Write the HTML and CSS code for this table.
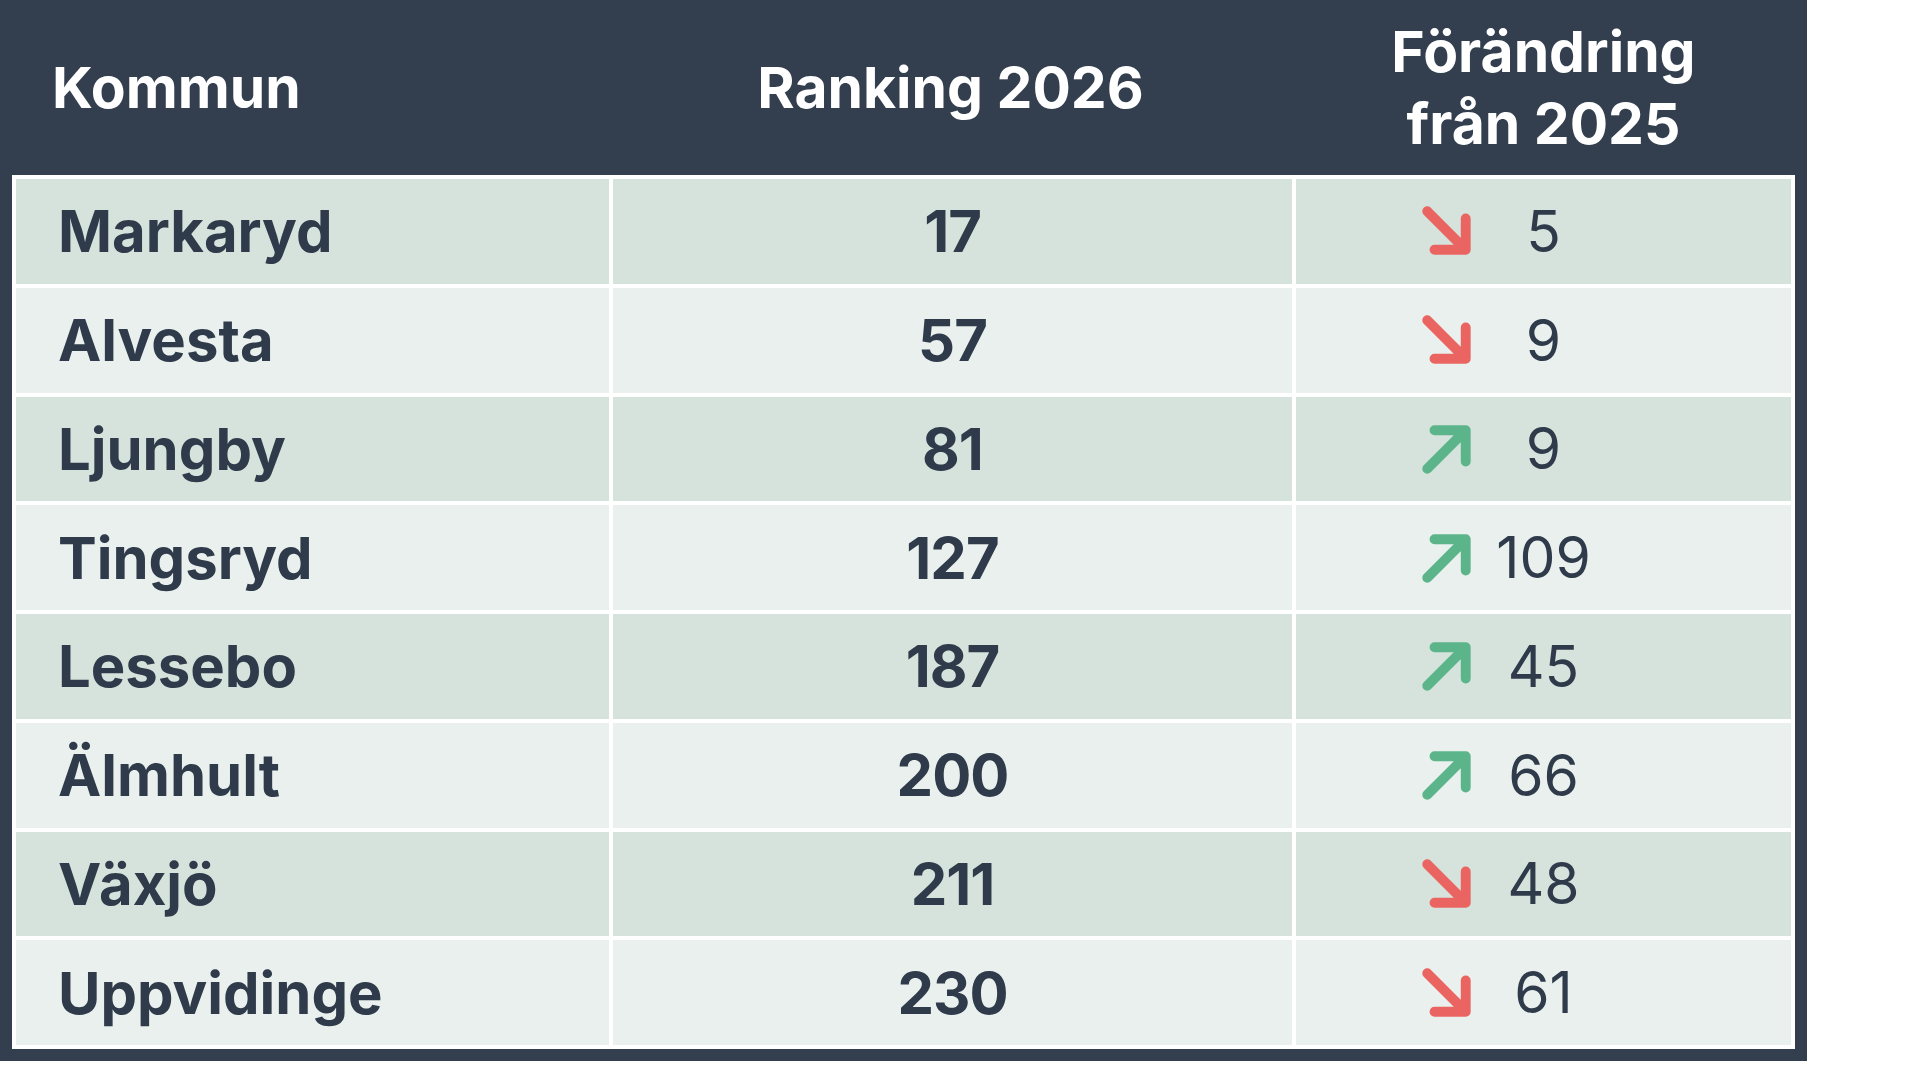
FILE: index.html
```html
<!DOCTYPE html>
<html lang="sv">
<head>
<meta charset="utf-8">
<title>Ranking 2026</title>
<link rel="stylesheet" href="styles.css">
</head>
<body>
<div class="frame">
  <table class="rank">
    <colgroup>
      <col class="c1"><col class="c2"><col class="c3">
    </colgroup>
    <thead>
      <tr>
        <th class="name">Kommun</th>
        <th>Ranking 2026</th>
        <th>Förändring<br>från 2025</th>
      </tr>
    </thead>
    <tbody>
      <tr class="odd"><td class="name">Markaryd</td><td class="num">17</td><td class="chg"><span class="ch"><svg class="arr down" viewBox="0 0 50 50"><path d="M6 6 L43 43 M43 13 L43 43 L13 43"/></svg><span class="val">5</span></span></td></tr>
      <tr class="even"><td class="name">Alvesta</td><td class="num">57</td><td class="chg"><span class="ch"><svg class="arr down" viewBox="0 0 50 50"><path d="M6 6 L43 43 M43 13 L43 43 L13 43"/></svg><span class="val">9</span></span></td></tr>
      <tr class="odd"><td class="name">Ljungby</td><td class="num">81</td><td class="chg"><span class="ch"><svg class="arr up" viewBox="0 0 50 50"><path d="M6 44 L43 7 M13 7 L43 7 L43 37"/></svg><span class="val">9</span></span></td></tr>
      <tr class="even"><td class="name">Tingsryd</td><td class="num">127</td><td class="chg"><span class="ch"><svg class="arr up" viewBox="0 0 50 50"><path d="M6 44 L43 7 M13 7 L43 7 L43 37"/></svg><span class="val">109</span></span></td></tr>
      <tr class="odd"><td class="name">Lessebo</td><td class="num">187</td><td class="chg"><span class="ch"><svg class="arr up" viewBox="0 0 50 50"><path d="M6 44 L43 7 M13 7 L43 7 L43 37"/></svg><span class="val">45</span></span></td></tr>
      <tr class="even"><td class="name">Älmhult</td><td class="num">200</td><td class="chg"><span class="ch"><svg class="arr up" viewBox="0 0 50 50"><path d="M6 44 L43 7 M13 7 L43 7 L43 37"/></svg><span class="val">66</span></span></td></tr>
      <tr class="odd"><td class="name">Växjö</td><td class="num">211</td><td class="chg"><span class="ch"><svg class="arr down" viewBox="0 0 50 50"><path d="M6 6 L43 43 M43 13 L43 43 L13 43"/></svg><span class="val">48</span></span></td></tr>
      <tr class="even last"><td class="name">Uppvidinge</td><td class="num">230</td><td class="chg"><span class="ch"><svg class="arr down" viewBox="0 0 50 50"><path d="M6 6 L43 43 M43 13 L43 43 L13 43"/></svg><span class="val">61</span></span></td></tr>
    </tbody>
  </table>
</div>
</body>
</html>
```
FILE: styles.css
```css
html, body {
  margin: 0;
  padding: 0;
  background: #ffffff;
}

body {
  font-family: Inter, "Noto Sans", "Liberation Sans", sans-serif;
  color: #2f3b4a;
}

.frame {
  width: 1807px;
  box-sizing: border-box;
  background: #333f4e;
  padding: 0 12px 12px 12px;
}

.rank {
  width: 100%;
  border-collapse: separate;
  border-spacing: 0;
  table-layout: fixed;
}

.c1 { width: 597px; }
.c2 { width: 683px; }

.rank th {
  height: 175px;
  padding: 0;
  color: #ffffff;
  font-weight: 700;
  font-size: 57px;
  line-height: 72px;
  text-align: center;
  vertical-align: middle;
}

.rank th.name {
  text-align: left;
  padding-left: 40px;
}

.rank td {
  height: 104.75px;
  padding: 0;
  border-top: 4px solid #ffffff;
  border-left: 4px solid #ffffff;
  font-size: 58px;
  vertical-align: middle;
}

.rank td.chg {
  border-right: 4px solid #ffffff;
}

.rank tr.last td {
  border-bottom: 4px solid #ffffff;
}

.odd td { background: #d5e3dc; }
.even td { background: #e9f0ed; }

.rank td.name {
  font-weight: 700;
  padding-left: 42px;
}

.rank td.num {
  font-weight: 700;
  text-align: center;
  letter-spacing: -1px;
}

.ch {
  display: grid;
  grid-template-areas: "stack";
  align-items: center;
}

.arr {
  grid-area: stack;
  justify-self: start;
  margin-left: 125px;
  width: 52px;
  height: 52px;
  fill: none;
  stroke-width: 9.5;
  stroke-linecap: round;
  stroke-linejoin: round;
}

.arr.down { stroke: #ea6561; }
.arr.up { stroke: #5cb58a; }

.val {
  grid-area: stack;
  justify-self: center;
  font-weight: 400;
  font-size: 57px;
  color: #2f3b4a;
}
```
